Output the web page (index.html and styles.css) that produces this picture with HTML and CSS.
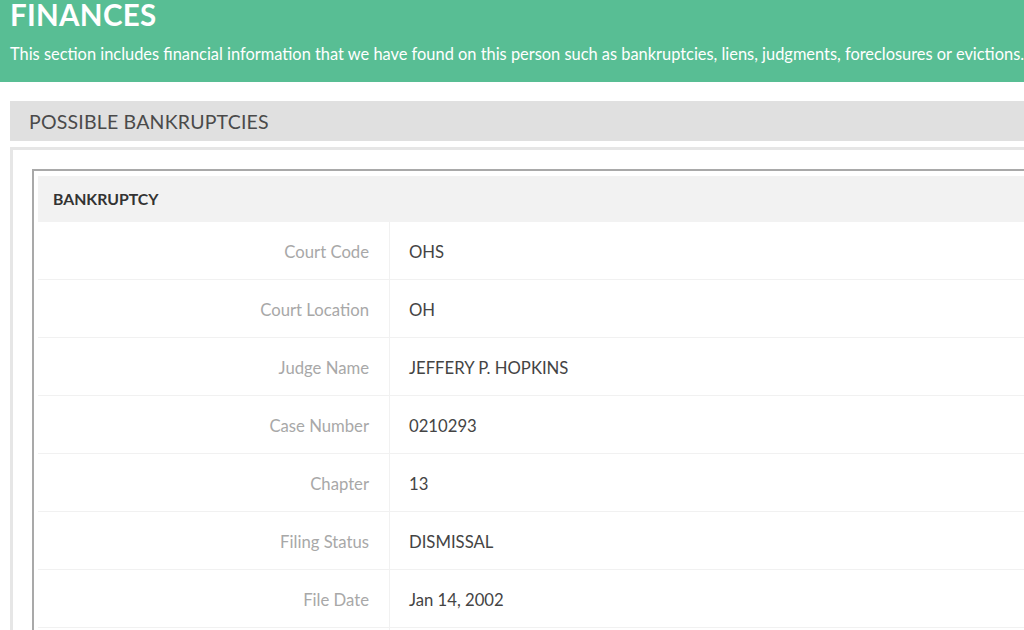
FILE: index.html
```html
<!DOCTYPE html>
<html>
<head>
<meta charset="utf-8">
<link rel="stylesheet" href="styles.css">
</head>
<body>
<div class="hero">
  <h1 class="hero-title">FINANCES</h1>
  <p class="hero-sub">This section includes financial information that we have found on this person such as bankruptcies, liens, judgments, foreclosures or evictions.</p>
</div>
<div class="section">
  <div class="section-bar">POSSIBLE BANKRUPTCIES</div>
  <div class="outer-box">
    <div class="inner-box">
      <div class="card-head">BANKRUPTCY</div>
      <div class="row"><div class="label">Court Code</div><div class="value">OHS</div></div>
      <div class="row"><div class="label">Court Location</div><div class="value">OH</div></div>
      <div class="row"><div class="label">Judge Name</div><div class="value">JEFFERY P. HOPKINS</div></div>
      <div class="row"><div class="label">Case Number</div><div class="value">0210293</div></div>
      <div class="row"><div class="label">Chapter</div><div class="value">13</div></div>
      <div class="row"><div class="label">Filing Status</div><div class="value">DISMISSAL</div></div>
      <div class="row"><div class="label">File Date</div><div class="value">Jan 14, 2002</div></div>
      <div class="row"><div class="label">&nbsp;</div><div class="value">&nbsp;</div></div>
    </div>
  </div>
</div>
</body>
</html>
```
FILE: styles.css
```css
* { box-sizing: border-box; }
html, body { margin: 0; padding: 0; }
body {
  font-family: Lato, "Open Sans", sans-serif;
  background: #fff;
  width: 1040px;
  overflow: hidden;
  height: 630px;
}
.hero {
  background: #58be94;
  color: #fff;
  padding: 0 10px;
  height: 82px;
}
.hero-title {
  margin: 0;
  padding-top: 2px;
  font-size: 29.5px;
  font-weight: 700;
  line-height: 26px;
  letter-spacing: 0.3px;
}
.hero-sub {
  margin: 0;
  padding-top: 15px;
  font-size: 16.4px;
  line-height: 22px;
  white-space: nowrap;
}
.section {
  padding: 19px 0 0 10px;
}
.section-bar {
  background: #e0e0e0;
  height: 40px;
  line-height: 41px;
  padding-left: 19px;
  font-size: 19.5px;
  color: #4a4a4a;
  letter-spacing: 0.2px;
}
.outer-box {
  margin-top: 6px;
  border: 3px solid #e6e6e6;
  border-right: none;
  border-bottom: none;
  padding: 19px 0 0 19px;
}
.inner-box {
  border: 2px solid #a9a9a9;
  border-right: none;
  border-bottom: none;
  padding: 5px 0 0 4px;
}
.card-head {
  background: #f2f2f2;
  height: 46px;
  line-height: 46px;
  padding-left: 15px;
  font-size: 15.8px;
  font-weight: 700;
  color: #333;
}
.row {
  display: flex;
  height: 58px;
  border-bottom: 1px solid #f1f1f1;
}
.label {
  width: 352px;
  flex: none;
  text-align: right;
  padding-right: 20px;
  border-right: 1px solid #f1f1f1;
  color: #a8a8a8;
  font-size: 16.7px;
  line-height: 60px;
}
.value {
  padding-left: 19px;
  color: #444;
  font-size: 16.7px;
  line-height: 60px;
}
```
